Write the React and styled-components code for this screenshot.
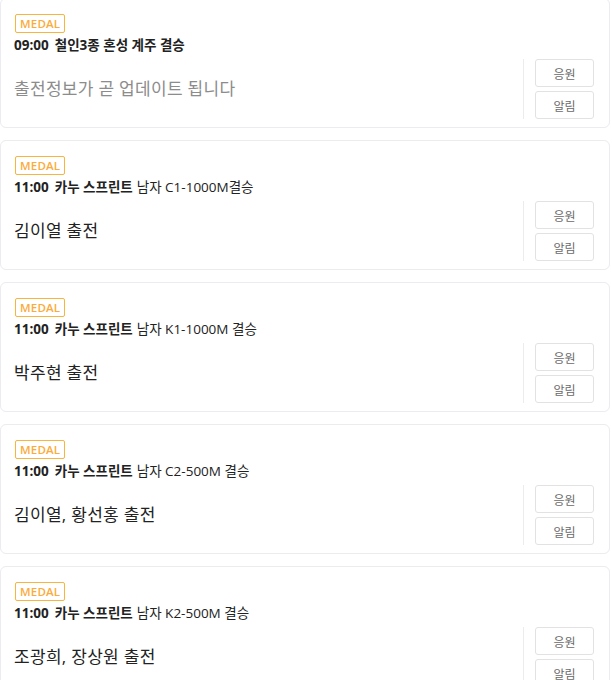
import React from 'react';
import styled, { createGlobalStyle } from 'styled-components';

const GlobalStyle = createGlobalStyle`
    html, body {
        margin: 0;
        padding: 0;
        background: #fff;
    }
    body {
        font-family: "Open Sans", "Noto Sans CJK KR", sans-serif;
        color: #222;
    }
`;

const List = styled.div`
    display: flex;
    flex-direction: column;
    gap: 12px;
    width: 610px;
    margin-top: -2px;
`;

const Card = styled.div`
    display: flex;
    flex-direction: column;
    height: 130px;
    box-sizing: border-box;
    padding: 15px 15px 8px 13px;
    border: 1px solid #ebebf0;
    border-radius: 6px;
    background: #fff;
`;

const Badge = styled.span`
    align-self: flex-start;
    box-sizing: border-box;
    height: 19px;
    margin-left: 1px;
    padding: 0 4px;
    border: 1px solid #f8b43c;
    border-radius: 2px;
    color: #fbab3a;
    font-size: 11.5px;
    font-weight: 600;
    line-height: 17px;
    letter-spacing: 0.2px;
`;

const Title = styled.div`
    margin-top: 3px;
    font-size: 13.5px;
    line-height: 19px;
    color: #222;
    white-space: nowrap;
`;

const Time = styled.b`
    font-weight: 700;
    margin-right: 6px;
`;

const Sport = styled.b`
    font-weight: 700;
    margin-right: 4px;
`;

const Body = styled.div`
    display: flex;
    align-items: center;
    margin-top: auto;
`;

const Info = styled.div`
    flex: 1;
    font-size: 17px;
    letter-spacing: 0.3px;
    color: ${props => (props.$muted ? '#8c8c8c' : '#222')};
    padding-bottom: 3px;
`;

const Divider = styled.div`
    align-self: stretch;
    width: 1px;
    background: #ececec;
    margin-right: 11px;
`;

const Buttons = styled.div`
    display: flex;
    flex-direction: column;
    gap: 4px;
`;

const Button = styled.button`
    width: 59px;
    height: 28px;
    padding: 0;
    border: 1px solid #e2e2e2;
    border-radius: 3px;
    background: #fff;
    color: #6a6a6a;
    font-family: "Noto Sans CJK KR", sans-serif;
    font-size: 12px;
    cursor: pointer;
`;

const events = [
    { time: '09:00', sport: '철인3종 혼성 계주 결승', detail: '', info: '출전정보가 곧 업데이트 됩니다', muted: true },
    { time: '11:00', sport: '카누 스프린트', detail: '남자 C1-1000M결승', info: '김이열 출전' },
    { time: '11:00', sport: '카누 스프린트', detail: '남자 K1-1000M 결승', info: '박주현 출전' },
    { time: '11:00', sport: '카누 스프린트', detail: '남자 C2-500M 결승', info: '김이열, 황선홍 출전' },
    { time: '11:00', sport: '카누 스프린트', detail: '남자 K2-500M 결승', info: '조광희, 장상원 출전' },
];

const App = () => {
    return (
        <>
            <GlobalStyle />
            <List>
                {events.map((ev, i) => (
                    <Card key={i}>
                        <Badge>MEDAL</Badge>
                        <Title>
                            <Time>{ev.time}</Time>
                            <Sport>{ev.sport}</Sport>
                            {ev.detail}
                        </Title>
                        <Body>
                            <Info $muted={ev.muted}>{ev.info}</Info>
                            <Divider />
                            <Buttons>
                                <Button>응원</Button>
                                <Button>알림</Button>
                            </Buttons>
                        </Body>
                    </Card>
                ))}
            </List>
        </>
    );
};

export default App;
